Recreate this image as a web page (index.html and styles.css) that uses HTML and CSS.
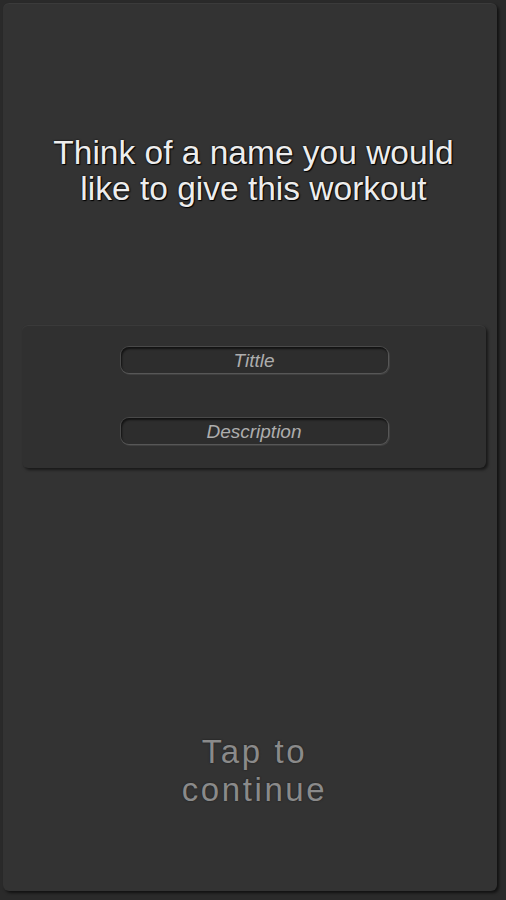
FILE: index.html
```html
<!DOCTYPE html>
<html lang="en">
<head>
  <meta charset="UTF-8" />
  <meta name="viewport" content="width=device-width, initial-scale=1.0"/>
  <title>Name Workout</title>
  <link rel="stylesheet" href="styles.css">
</head>
<body>
  <div class="panel">
    <h1 class="prompt">Think of a name you would<br>like to give this workout</h1>

    <div class="card">
      <input class="field" type="text" placeholder="Tittle">
      <input class="field" type="text" placeholder="Description">
    </div>

    <div class="tap">Tap to<br>continue</div>
  </div>
</body>
</html>
```

FILE: styles.css
```css
* { box-sizing: border-box; }

body {
  margin: 0;
  background-color: #2a2a2a;
  font-family: 'Liberation Sans', Arial, sans-serif;
}

.panel {
  margin: 3px 9px 9px 3px;
  height: 888px;
  background-color: #333333;
  border-radius: 6px;
  box-shadow: 2px 2px 3px rgba(0,0,0,0.6), inset 0 1px 0 rgba(255,255,255,0.04);
  display: flex;
  flex-direction: column;
  align-items: center;
  padding: 132px 0 0 7px;
}

.prompt {
  margin: 0;
  font-size: 33.5px;
  font-weight: normal;
  line-height: 36px;
  text-align: center;
  color: #ededed;
  text-shadow: 0 0 2px #000, 1px 1px 1px #000;
}

.card {
  margin: 118px 11px 0 12px;
  align-self: stretch;
  height: 143px;
  background-color: #303030;
  border-radius: 6px;
  box-shadow: 2px 2px 3px rgba(0,0,0,0.55), inset 0 1px 0 rgba(255,255,255,0.05);
  display: flex;
  flex-direction: column;
  align-items: center;
  padding-top: 22px;
  gap: 45px;
}

.field {
  width: 267px;
  height: 26px;
  border: none;
  border-radius: 8px;
  background-color: #2d2d2d;
  box-shadow: inset 1px 2px 2px rgba(0,0,0,0.6), 0 0 0 1px rgba(255,255,255,0.12), 1px 1px 0 1px rgba(255,255,255,0.08);
  text-align: center;
  font-family: 'Liberation Sans', Arial, sans-serif;
  font-size: 19px;
  font-style: italic;
  color: #bbbbbb;
  outline: none;
  padding-top: 2px;
}

.field::placeholder {
  color: #adadad;
}

.tap {
  margin-top: auto;
  margin-bottom: 82px;
  padding-left: 2px;
  font-size: 33px;
  line-height: 38px;
  letter-spacing: 2.6px;
  text-align: center;
  color: #8a8a8a;
  text-shadow: 0 0 2px #1a1a1a;
}
```
